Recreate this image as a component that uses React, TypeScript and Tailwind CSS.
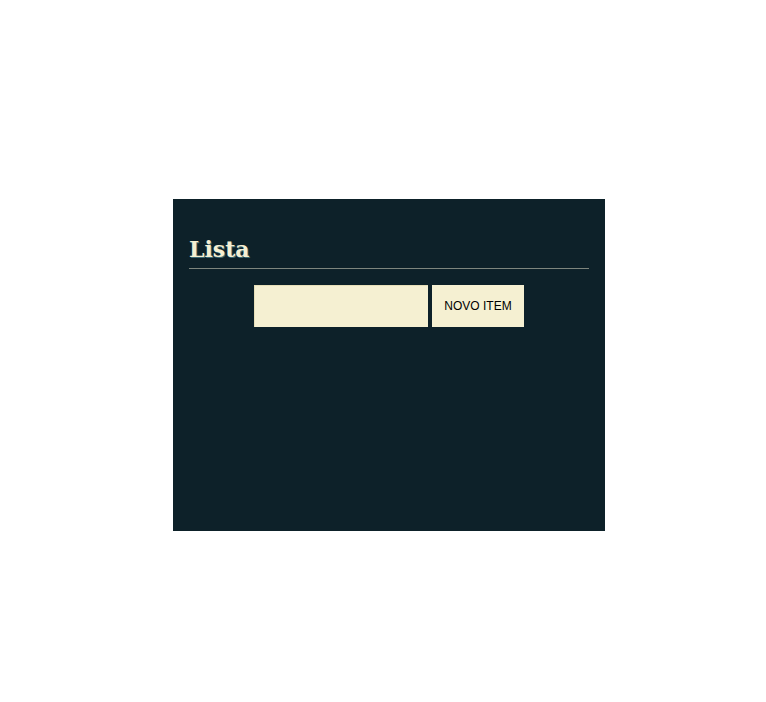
const App = () => {
  return (
    <div className="w-[766px] h-[702px] bg-white pt-[199px] pl-[173px]">
      <div className="w-[432px] h-[332px] bg-[#0d2129] px-4 pt-[35px]">
        <h1
          className="text-[22px] font-bold leading-[30px] text-[#f5efd2] border-b border-[#7d857d] pb-[4px] [text-shadow:1px_1px_0_#3a6a74]"
          style={{ fontFamily: '"DejaVu Serif", "Liberation Serif", serif' }}
        >
          Lista
        </h1>
        <div className="flex justify-center gap-1 mt-4">
          <input
            className="w-[174px] h-[42px] bg-[#f5f0d2] border-t border-l border-[#e6dfb8] outline-none"
            type="text"
          />
          <button
            className="w-[92px] h-[42px] bg-[#f5f0d2] text-[12px] text-black"
            style={{ fontFamily: '"Liberation Sans", Arial, sans-serif' }}
          >
            NOVO ITEM
          </button>
        </div>
      </div>
    </div>
  );
};

export default App;
